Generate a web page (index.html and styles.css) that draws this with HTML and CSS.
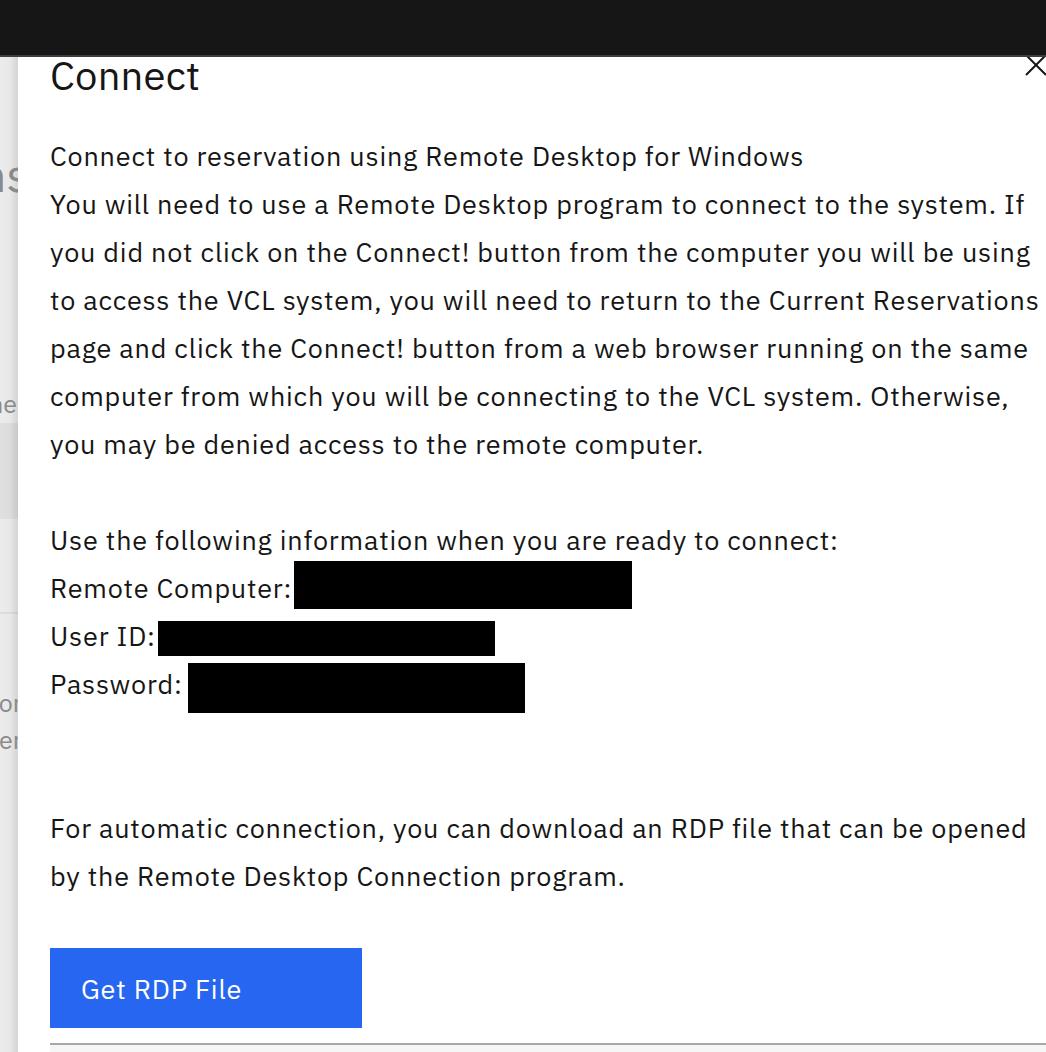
FILE: index.html
```html
<!DOCTYPE html>
<html lang="en">
<head>
<meta charset="utf-8">
<title>Connect</title>
<link rel="stylesheet" href="styles.css">
</head>
<body>
<header class="topbar"></header>
<div class="stage">
  <aside class="page-behind">
    <div class="behind-title"><span>Reservations</span></div>
    <div class="behind-row"><span>Name</span></div>
    <div class="behind-band"></div>
    <div class="behind-rule"></div>
    <div class="behind-line first"><span>Monitor</span></div>
    <div class="behind-line"><span>Server</span></div>
  </aside>
  <section class="modal">
    <svg class="close" viewBox="0 0 22 22" width="22" height="22" aria-label="Close">
      <path d="M1 1 L21 21 M21 1 L1 21" stroke="#161616" stroke-width="2" fill="none"/>
    </svg>
    <h2 class="modal-title">Connect</h2>
    <div class="modal-body">
      <p class="para">Connect to reservation using Remote Desktop for Windows<br>You will need to use a Remote Desktop program to connect to the system. If<br>you did not click on the Connect! button from the computer you will be using<br>to access the VCL system, you will need to return to the Current Reservations<br>page and click the Connect! button from a web browser running on the same<br>computer from which you will be connecting to the VCL system. Otherwise,<br>you may be denied access to the remote computer.</p>
      <p class="para info">Use the following information when you are ready to connect:<br>Remote Computer:<span class="redact r1"></span><br>User ID:<span class="redact r2"></span><br>Password: <span class="redact r3"></span></p>
      <p class="para auto">For automatic connection, you can download an RDP file that can be opened<br>by the Remote Desktop Connection program.</p>
      <button class="btn-primary" type="button">Get RDP File</button>
      <div class="next-field"></div>
    </div>
  </section>
</div>
</body>
</html>
```
FILE: styles.css
```css
html, body {
  margin: 0;
  padding: 0;
  overflow: hidden;
  height: 100%;
  background: #ffffff;
}
body {
  font-family: "IBM Plex Sans", "Noto Sans", "Liberation Sans", sans-serif;
  color: #161616;
}
.topbar {
  height: 55px;
  background: #161616;
  border-bottom: 2px solid #3d3d3d;
}
.stage {
  display: flex;
  height: 995px;
}
.page-behind {
  width: 18px;
  flex: 0 0 18px;
  overflow: hidden;
  background: linear-gradient(to right, #ececec 0%, #e8e8e8 55%, #d4d4d4 100%);
  color: #8a8a8a;
  display: flex;
  flex-direction: column;
}
.page-behind > div {
  display: flex;
  justify-content: flex-end;
  white-space: nowrap;
}
.behind-title {
  font-size: 48px;
  line-height: 46px;
  margin-top: 94px;
  height: 46px;
}
.behind-title span {
  margin-right: -12px;
}
.behind-row {
  font-size: 25px;
  line-height: 30px;
  margin-top: 192px;
  height: 30px;
}
.behind-row span {
  margin-right: 1px;
}
.behind-band {
  margin-top: 4px;
  height: 96px;
  background: rgba(0,0,0,0.05);
}
.behind-rule {
  margin-top: 93px;
  height: 2px;
  background: rgba(0,0,0,0.06);
}
.behind-line {
  font-size: 25px;
  line-height: 37px;
  height: 37px;
}
.behind-line.first {
  margin-top: 70px;
}
.behind-line span {
  margin-right: -4px;
}
.modal {
  position: relative;
  flex: 1 1 auto;
  background: #ffffff;
  padding: 0 0 0 32px;
  overflow: hidden;
}
.close {
  position: absolute;
  top: -3px;
  right: -1px;
}
.modal-title {
  margin: 0;
  font-weight: 400;
  font-size: 40px;
  letter-spacing: 0.2px;
  line-height: 36px;
  height: 36px;
}
.modal-body {
  padding-top: 39px;
  font-size: 27px;
  letter-spacing: 0.8px;
  line-height: 48px;
}
.para {
  margin: 0;
  white-space: nowrap;
}
.info {
  margin-top: 48px;
}
.auto {
  margin-top: 96px;
}
.redact {
  display: inline-block;
  position: relative;
  background: #000000;
  vertical-align: top;
}
.r1 {
  width: 338px;
  height: 48px;
  top: -3px;
  margin-left: 2px;
}
.r2 {
  width: 337px;
  height: 35px;
  top: 9px;
  margin-left: 2px;
}
.r3 {
  width: 337px;
  height: 50px;
  margin-bottom: -2px;
  margin-left: -2px;
  top: 3px;
}
.btn-primary {
  display: block;
  margin-top: 48px;
  width: 312px;
  height: 80px;
  border: 0;
  background: #2666f1;
  color: #ffffff;
  font-family: inherit;
  font-size: 27px;
  letter-spacing: 0.8px;
  text-align: left;
  padding: 0 0 0 31px;
}
.next-field {
  margin-top: 15px;
  height: 40px;
  border-top: 2px solid #a8a8a8;
  background: #f6f6f6;
}
```
